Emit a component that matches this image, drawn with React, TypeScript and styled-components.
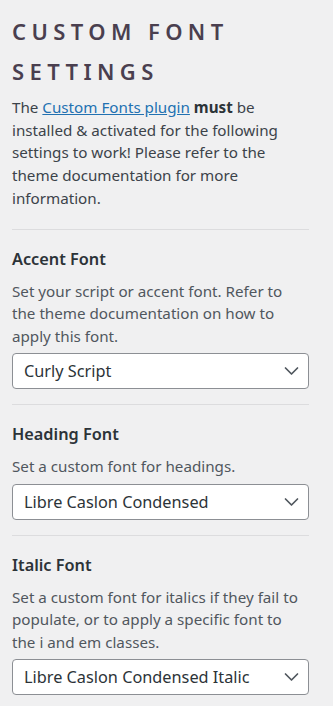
import React from "react";
import styled, { createGlobalStyle } from "styled-components";

const Global = createGlobalStyle`
  html, body { margin: 0; padding: 0; background: #f0f0f1; }
  body { font-family: "Noto Sans", "Open Sans", sans-serif; color: #3c434a; }
  * { box-sizing: border-box; }
`;

const Panel = styled.div`
  width: 333px;
  padding: 11px 24px 10px 12px;
`;

const Title = styled.h2`
  margin: 0;
  font-size: 22px;
  line-height: 40px;
  font-weight: 600;
  letter-spacing: 5.4px;
  color: #4a3f4f;
  text-transform: uppercase;
`;

const Intro = styled.p`
  margin: 5px 0 19px;
  font-size: 15.2px;
  line-height: 22.7px;
  color: #3c434a;
  a { color: #2271b1; text-decoration: underline; }
  strong { font-weight: 700; color: #2c3338; }
`;

const Section = styled.section`
  border-top: 1px solid #dcdcde;
  padding: 17px 0 15px;
`;

const Heading = styled.h3`
  margin: 0 0 9px;
  font-size: 16.3px;
  line-height: 24px;
  font-weight: 600;
  color: #2c3338;
`;

const Desc = styled.p`
  margin: 0 0 6px;
  max-width: 289px;
  font-size: 15.2px;
  line-height: 22.5px;
  color: #50575e;
`;

const SelectBox = styled.div`
  display: flex;
  align-items: center;
  justify-content: space-between;
  height: 36px;
  padding: 0 9px 0 11px;
  background: #fff;
  border: 1px solid #8c8f94;
  border-radius: 4px;
  font-size: 16.3px;
  color: #2c3338;
`;

const Chevron = () => (
  <svg width="15" height="14" viewBox="0 0 15 14" fill="none">
    <path d="M1.5 4 L7.5 10 L13.5 4" stroke="#50575e" strokeWidth="1.7" strokeLinecap="round" strokeLinejoin="round" />
  </svg>
);

const fields = [
  {
    title: "Accent Font",
    desc: "Set your script or accent font. Refer to the theme documentation on how to apply this font.",
    value: "Curly Script",
  },
  {
    title: "Heading Font",
    desc: "Set a custom font for headings.",
    value: "Libre Caslon Condensed",
  },
  {
    title: "Italic Font",
    desc: "Set a custom font for italics if they fail to populate, or to apply a specific font to the i and em classes.",
    value: "Libre Caslon Condensed Italic",
  },
];

export default function App() {
  return (
    <>
      <Global />
      <Panel>
        <Title>Custom Font Settings</Title>
        <Intro>
          The <a href="#">Custom Fonts plugin</a> <strong>must</strong> be installed &amp; activated for the following
          settings to work! Please refer to the theme documentation for more information.
        </Intro>
        {fields.map((f) => (
          <Section key={f.title}>
            <Heading>{f.title}</Heading>
            <Desc>{f.desc}</Desc>
            <SelectBox>
              <span>{f.value}</span>
              <Chevron />
            </SelectBox>
          </Section>
        ))}
      </Panel>
    </>
  );
}
